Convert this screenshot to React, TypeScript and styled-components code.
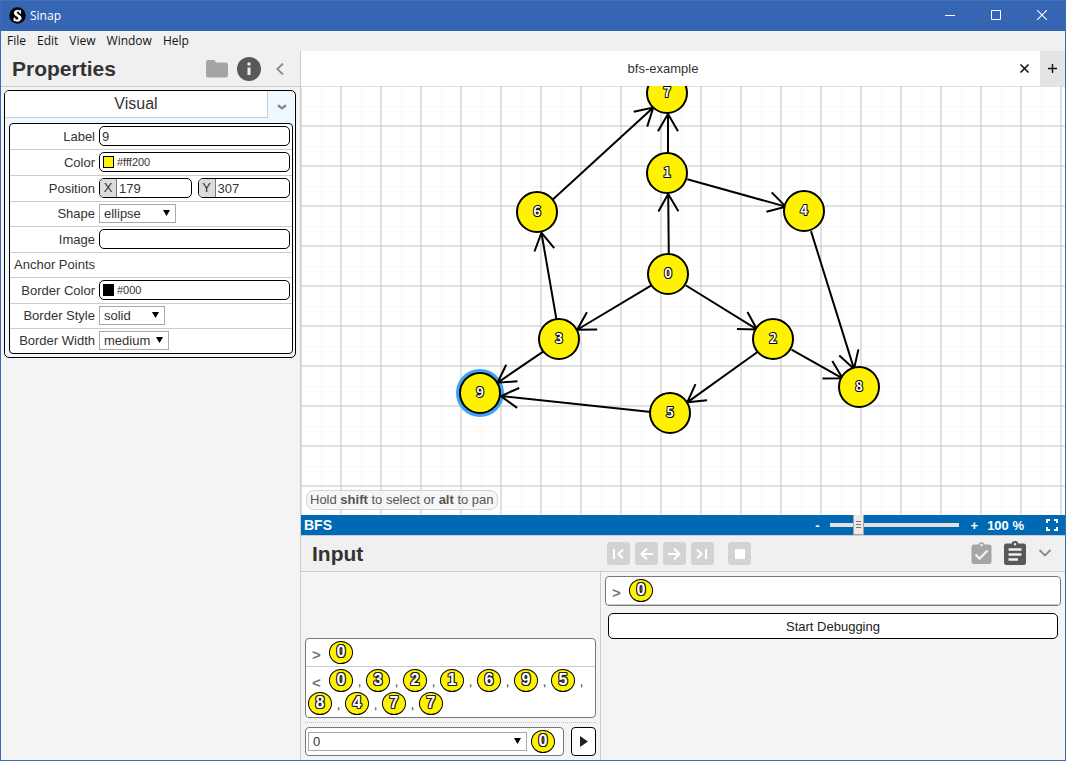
import React from 'react';
import styled, { createGlobalStyle, css } from 'styled-components';

const GlobalStyle = createGlobalStyle`
  *, *::before, *::after { box-sizing: border-box; }
  body {
    margin: 0;
    font-family: "Liberation Sans", Arial, sans-serif;
    font-size: 13px;
    color: #333;
  }
  button, input, select { font: inherit; color: inherit; margin: 0; }
  svg { display: block; }
`;

/* ---------- window frame ---------- */

const Window = styled.div`
  display: flex;
  flex-direction: column;
  height: 100vh;
  border: 1px solid #3d6ab5;
  border-top-color: #4370ba;
  background: #f4f4f4;
  overflow: hidden;
`;

const TitleBar = styled.header`
  display: flex;
  align-items: center;
  flex: none;
  height: 30px;
  padding: 0 0 2px 8px;
  background: #3665b3;
  color: #fff;
  font: 12px "Open Sans", "Segoe UI", sans-serif;
`;

const AppName = styled.span`
  flex: 1;
  padding-left: 4px;
`;

const PlainButton = styled.button`
  display: flex;
  align-items: center;
  justify-content: center;
  padding: 0;
  border: 0;
  background: none;
`;

const WindowButton = styled(PlainButton)`
  width: 46px;
  height: 28px;
  color: #fff;
`;

const MenuBar = styled.nav`
  display: flex;
  flex: none;
  gap: 11px;
  height: 20px;
  padding: 0 0 2px 6px;
  background: #f0f0f0;
`;

const MenuItem = styled(PlainButton)`
  color: #111;
  font: 12px "Open Sans", "Segoe UI", sans-serif;
`;

const Workspace = styled.div`
  display: flex;
  flex: 1;
  min-height: 0;
`;

/* ---------- sidebar ---------- */

const Sidebar = styled.aside`
  flex: none;
  width: 300px;
  border-right: 1px solid #ccc;
`;

const PanelHeader = styled.div`
  display: flex;
  align-items: center;
  height: 36px;
  padding: 0 15px 0 11px;
  border-bottom: 1px solid #ccc;
  background: #f0f0f0;
`;

const PanelTitle = styled.h2`
  flex: 1;
  margin: 0;
  font-size: 21px;
  line-height: 34px;
  font-weight: bold;
`;

const IconButton = styled(PlainButton)<{ $active?: boolean }>`
  color: ${(p) => (p.$active ? '#585858' : '#a5a5a5')};
`;

const SidebarIcons = styled.div`
  display: flex;
  align-items: center;
  gap: 9px;
`;

const Group = styled.section`
  margin: 3px 4px 0 3px;
  border: 1px solid #000;
  border-radius: 5px;
  background: #f0f8ff;
  overflow: hidden;
`;

const GroupHeader = styled.div`
  display: flex;
  height: 27px;
`;

const GroupTitle = styled.h3`
  flex: 1;
  margin: 0;
  border: solid #ccc;
  border-width: 0 1px 1px 0;
  background: #fff;
  font-size: 16px;
  font-weight: normal;
  line-height: 25px;
  text-align: center;
`;

const GroupToggle = styled(PlainButton)`
  width: 27px;
  padding-top: 4px;
  color: #888;
`;

const Fields = styled.div`
  margin: 5px 2px 3px 4px;
  border: 1px solid #000;
  border-radius: 4px;
  background: #fff;
  overflow: hidden;
`;

const FieldRow = styled.div<{ $compact?: boolean }>`
  display: grid;
  grid-template-columns: 85px 1fr;
  column-gap: 4px;
  align-items: center;
  height: ${(p) => (p.$compact ? '25px' : '26px')};
  padding: 0 2px 1px 0;
  border-bottom: 1px solid #ccc;
  &:last-child { height: 24px; border-bottom: 0; }
`;

const FieldLabel = styled.label`
  text-align: right;
  white-space: nowrap;
`;

const boxed = css`
  height: 20px;
  border: 1px solid #000;
  border-radius: 5px;
  background: #fff;
`;

const TextInput = styled.input`
  ${boxed}
  width: 100%;
  padding: 0 2px;
`;

const ColorBox = styled.div`
  ${boxed}
  display: flex;
  align-items: center;
  gap: 3px;
  padding-left: 3px;
`;

const Swatch = styled.span<{ $color: string }>`
  width: 11px;
  height: 12px;
  border: 1px solid #000;
  background: ${(p) => p.$color};
`;

const BareInput = styled.input<{ $small?: boolean }>`
  flex: 1;
  min-width: 0;
  padding: 0;
  border: 0;
  background: none;
  font-size: ${(p) => (p.$small ? '11px' : '13px')};
`;

const Pair = styled.div`
  display: grid;
  grid-template-columns: 1fr 1fr;
  gap: 6px;
`;

const AxisBox = styled.label`
  ${boxed}
  display: flex;
  gap: 2px;
  overflow: hidden;
`;

const AxisName = styled.span`
  width: 17px;
  border-right: 1px solid #777;
  background: #dcdcdc;
  line-height: 18px;
  text-align: center;
`;

const SelectWrap = styled.span<{ $width: string }>`
  position: relative;
  display: block;
  width: ${(p) => p.$width};
  height: 19px;
  svg {
    position: absolute;
    right: 6px;
    top: 6px;
    pointer-events: none;
  }
`;

const SelectBox = styled.select`
  appearance: none;
  display: block;
  width: 100%;
  height: 19px;
  padding: 0 4px;
  border: 1px solid #a9a9a9;
  border-radius: 0;
  background: #fff;
`;

/* ---------- editor ---------- */

const Main = styled.main`
  display: flex;
  flex: 1;
  flex-direction: column;
  min-width: 0;
`;

const TabBar = styled.div`
  display: flex;
  flex: none;
  height: 35px;
  background: #fff;
`;

const Tab = styled.div`
  display: flex;
  flex: 1;
  align-items: center;
  padding-right: 10px;
`;

const TabName = styled.span`
  flex: 1;
  padding-left: 6px;
  text-align: center;
`;

const CloseTab = styled(PlainButton)`
  color: #111;
`;

const AddTab = styled(PlainButton)`
  width: 25px;
  background: #e4e4e4;
  color: #111;
`;

const Canvas = styled.div`
  position: relative;
  flex: 1;
  min-height: 0;
  background: #fff;
  overflow: hidden;
`;

const Hint = styled.p`
  position: absolute;
  left: 5px;
  bottom: 5px;
  margin: 0;
  padding: 0 3px;
  border: 1px solid #d4d4d4;
  border-radius: 8px;
  background: rgba(244, 244, 244, 0.8);
  color: #555;
  line-height: 18px;
`;

const StatusBar = styled.footer`
  display: flex;
  flex: none;
  align-items: center;
  height: 20px;
  padding: 0 7px 0 3px;
  background: #0069b4;
  color: #fff;
  font-weight: bold;
`;

const PluginName = styled.span`
  flex: 1;
  font-size: 14px;
`;

const ZoomSlider = styled.input`
  appearance: none;
  width: 129px;
  height: 20px;
  margin: 0 12px 0 10px;
  background: none;
  &::-webkit-slider-runnable-track {
    height: 4px;
    background: #e5e0de;
  }
  &::-webkit-slider-thumb {
    appearance: none;
    width: 11px;
    height: 20px;
    margin-top: -8px;
    border: solid #a9a39f;
    border-width: 0 1px 1px;
    background:
      linear-gradient(#777, #777) center 6px / 5px 1px no-repeat,
      linear-gradient(#777, #777) center 9px / 5px 1px no-repeat,
      linear-gradient(#777, #777) center 12px / 5px 1px no-repeat,
      #ebe8e6;
  }
`;

const ZoomButton = styled(PlainButton)`
  font-weight: bold;
`;

const ZoomValue = styled.output`
  padding: 0 22px 0 9px;
`;

/* ---------- input panel ---------- */

const BottomHeader = styled.div`
  display: grid;
  grid-template-columns: 1fr auto 1fr;
  align-items: center;
  flex: none;
  height: 37px;
  padding-right: 8px;
  border: solid #ccc;
  border-width: 1px 0;
  background: #f0f0f0;
`;

const BottomTitle = styled(PanelTitle)`
  padding-left: 11px;
`;

const Steps = styled.div`
  display: flex;
  gap: 5px;
`;

const StepButton = styled(PlainButton)<{ $apart?: boolean }>`
  width: 23px;
  height: 23px;
  margin-left: ${(p) => (p.$apart ? '9px' : '0')};
  border-radius: 3px;
  background: #d3d3d3;
  color: #fff;
`;

const PanelIcons = styled.div`
  display: flex;
  align-items: center;
  justify-content: flex-end;
  gap: 12px;
  padding: 0 5px 2px 0;
`;

const BottomBody = styled.div`
  display: flex;
  flex: none;
  height: 188px;
`;

const Console = styled.section`
  display: flex;
  flex-direction: column;
  flex: none;
  justify-content: flex-end;
  width: 300px;
  padding: 4px;
  border-right: 1px solid #ccc;
`;

const Debugger = styled.section`
  flex: 1;
  padding: 4px;
`;

const Card = styled.div`
  border: 1px solid #777;
  border-radius: 4px;
  background: #fff;
  overflow: hidden;
`;

const Line = styled.div<{ $divided?: boolean }>`
  display: flex;
  flex-wrap: wrap;
  padding: 2px;
  border-bottom: ${(p) => (p.$divided ? '1px solid #ccc' : '0')};
`;

const Prompt = styled.span`
  width: 21px;
  padding: 5px 4px 0;
  color: #777;
  font-size: 15px;
  font-weight: bold;
  line-height: 18px;
`;

const Item = styled.span`
  display: flex;
  align-items: flex-end;
  line-height: 20px;
`;

const Comma = styled.span`
  width: 13px;
  text-align: center;
`;

const NodeBadge = styled.span`
  display: block;
  flex: none;
  width: 24px;
  height: 23px;
  border: 1px solid #000;
  border-radius: 50%;
  background: #fff200;
  color: #fff;
  font-size: 16px;
  font-weight: bold;
  line-height: 19px;
  text-align: center;
  text-shadow: 1px 0 #222, -1px 0 #222, 0 1px #222, 0 -1px #222, 1px 1px #222, -1px -1px #222, 1px -1px #222, -1px 1px #222;
`;

const Entry = styled.form`
  display: flex;
  gap: 7px;
  margin-top: 4px;
  padding-top: 4px;
  border-top: 1px dotted #bbb;
`;

const EntryField = styled.div`
  display: flex;
  flex: 1;
  align-items: center;
  gap: 4px;
  height: 29px;
  padding: 0 8px 0 2px;
  border: 1px solid #777;
  border-radius: 4px;
  background: #fff;
`;

const RunButton = styled(PlainButton)`
  width: 25px;
  height: 29px;
  border: 1px solid #000;
  border-radius: 4px;
  background: #fff;
`;

const DebugButton = styled(PlainButton)`
  width: calc(100% - 6px);
  height: 26px;
  margin: 7px 3px 0;
  border: 1px solid #000;
  border-radius: 5px;
  background: #fff;
  color: #222;
`;

/* ---------- graph ---------- */

const NodeText = styled.text`
  fill: #fff;
  stroke: #000;
  stroke-width: 2px;
  stroke-linejoin: round;
  paint-order: stroke;
  font: bold 13px "Noto Sans CJK JP", "DejaVu Sans", sans-serif;
  text-anchor: middle;
`;

interface GraphNode { x: number; y: number; selected?: boolean }

const nodes: GraphNode[] = [
  { x: 367, y: 188 },
  { x: 366, y: 87 },
  { x: 472, y: 253 },
  { x: 258, y: 253 },
  { x: 503, y: 125 },
  { x: 369, y: 327 },
  { x: 236, y: 126 },
  { x: 366, y: 7 },
  { x: 558, y: 301 },
  { x: 179, y: 307, selected: true },
];

const edges: [number, number][] = [
  [0, 1], [0, 2], [0, 3], [1, 7], [1, 4], [2, 5], [2, 8], [3, 6], [3, 9], [4, 8], [5, 9], [6, 7],
];

const RADIUS = 20;

function edgePath(from: GraphNode, to: GraphNode) {
  const angle = Math.atan2(to.y - from.y, to.x - from.x);
  const point = (x: number, y: number, a: number, r: number) =>
    `${(x + r * Math.cos(a)).toFixed(1)} ${(y + r * Math.sin(a)).toFixed(1)}`;
  const tipX = to.x + 1 - RADIUS * Math.cos(angle);
  const tipY = to.y + 1 - RADIUS * Math.sin(angle);
  const left = point(tipX, tipY, angle + Math.PI - Math.PI / 6, 20);
  const right = point(tipX, tipY, angle + Math.PI + Math.PI / 6, 20);
  return `M${point(from.x + 1, from.y + 1, angle, RADIUS)} L${tipX} ${tipY} M${left} L${tipX} ${tipY} L${right}`;
}

function Graph() {
  return (
    <svg width="100%" height="100%" role="img" aria-label="bfs-example graph">
      <defs>
        <pattern id="grid" width="40" height="40" patternUnits="userSpaceOnUse">
          <path d="M20 0V40M0 20H40" fill="none" stroke="#f0f0f0" strokeWidth="1" strokeDasharray="2 2" transform="translate(0.5 0.5)" />
          <path d="M0 0V40M40 0V40" fill="none" stroke="#c8c8c8" strokeOpacity="0.55" strokeWidth="2" />
          <path d="M0 0H40M0 40H40" fill="none" stroke="#c8c8c8" strokeOpacity="0.55" strokeWidth="2" />
        </pattern>
      </defs>
      <rect width="100%" height="100%" fill="url(#grid)" />
      {nodes.filter((n) => n.selected).map((n) => (
        <circle key={`${n.x},${n.y}`} cx={n.x} cy={n.y} r="24" fill="#39a3f4" />
      ))}
      <path d={edges.map(([a, b]) => edgePath(nodes[a], nodes[b])).join(' ')} fill="none" stroke="#000" strokeWidth="2" />
      {nodes.map((n, i) => (
        <g key={i}>
          <circle cx={n.x} cy={n.y} r={RADIUS} fill="#fff200" stroke="#000" strokeWidth="2" />
          <NodeText x={n.x} y={n.y + 4}>{i}</NodeText>
        </g>
      ))}
    </svg>
  );
}

/* ---------- shared pieces ---------- */

function Dropdown({ id, width, value, label }: { id: string; width: string; value: string; label?: string }) {
  return (
    <SelectWrap $width={width}>
      <SelectBox id={id} defaultValue={value} aria-label={label}>
        <option value={value}>{value}</option>
      </SelectBox>
      <svg width="7" height="6" viewBox="0 0 7 6"><path d="M0 0H7L3.5 6Z" fill="#000" /></svg>
    </SelectWrap>
  );
}

function ColorField({ id, value }: { id: string; value: string }) {
  return (
    <ColorBox>
      <Swatch $color={value} />
      <BareInput $small id={id} defaultValue={value} />
    </ColorBox>
  );
}

const visited = [0, 3, 2, 1, 6, 9, 5, 8, 4, 7, 7];

export default function App() {
  return (
    <Window>
      <GlobalStyle />
      <TitleBar>
        <svg width="17" height="17" viewBox="0 0 17 17">
          <circle cx="8.5" cy="8.5" r="8.2" fill="#000" />
          <path d="M11.6 6.3V3.4L10.8 3.9C8 2.4 5.2 3.6 5.3 6C5.4 9.3 9.8 8.8 9.8 11.3C9.8 13.5 6.5 13.6 5.6 10.9H5V14L5.9 13.6C8.8 15.1 12.2 13.8 12.1 11C12 7.6 7.4 8.2 7.5 5.6C7.6 3.6 10.4 3.8 11.1 6.3Z" fill="#fff" stroke="#fff" strokeWidth="0.9" />
        </svg>
        <AppName>Sinap</AppName>
        <WindowButton aria-label="Minimize">
          <svg width="10" height="10" viewBox="0 0 10 10"><path d="M0 5.5H10" stroke="#fff" /></svg>
        </WindowButton>
        <WindowButton aria-label="Maximize">
          <svg width="10" height="10" viewBox="0 0 10 10"><path d="M.5 .5H9.5V9.5H.5Z" fill="none" stroke="#fff" /></svg>
        </WindowButton>
        <WindowButton aria-label="Close">
          <svg width="10" height="10" viewBox="0 0 10 10"><path d="M0 0L10 10M10 0L0 10" stroke="#fff" strokeWidth="1.1" /></svg>
        </WindowButton>
      </TitleBar>

      <MenuBar>
        {['File', 'Edit', 'View', 'Window', 'Help'].map((m) => <MenuItem key={m}>{m}</MenuItem>)}
      </MenuBar>

      <Workspace>
        <Sidebar>
          <PanelHeader>
            <PanelTitle>Properties</PanelTitle>
            <SidebarIcons>
              <IconButton aria-label="Files">
                <svg width="22" height="18" viewBox="0 0 22 18"><path d="M2 0H8L10.500 2.500H20Q22 2.500 22 4.500V15.500Q22 17.500 20 17.500H2Q0 17.500 0 15.500V2Q0 0 2 0Z" fill="currentColor" /></svg>
              </IconButton>
              <IconButton $active aria-label="Properties">
                <svg width="24" height="24" viewBox="0 0 24 24">
                  <circle cx="12" cy="12" r="12" fill="currentColor" />
                  <path d="M12 5.500V8.500M12 10.500V18" stroke="#f0f0f0" strokeWidth="3" />
                </svg>
              </IconButton>
              <IconButton aria-label="Collapse sidebar">
                <svg width="15" height="12" viewBox="0 0 15 12"><path d="M13 .5L7.300 6L13 11.500" fill="none" stroke="#888" strokeWidth="1.800" /></svg>
              </IconButton>
            </SidebarIcons>
          </PanelHeader>

          <Group>
            <GroupHeader>
              <GroupTitle>Visual</GroupTitle>
              <GroupToggle aria-label="Collapse Visual">
                <svg width="10" height="6" viewBox="0 0 10 6"><path d="M1 1.200L5 4.400L9 1.200" fill="none" stroke="currentColor" strokeWidth="2.400" strokeLinejoin="round" /></svg>
              </GroupToggle>
            </GroupHeader>
            <Fields>
              <FieldRow>
                <FieldLabel htmlFor="label">Label</FieldLabel>
                <TextInput id="label" defaultValue="9" />
              </FieldRow>
              <FieldRow>
                <FieldLabel htmlFor="color">Color</FieldLabel>
                <ColorField id="color" value="#fff200" />
              </FieldRow>
              <FieldRow>
                <FieldLabel htmlFor="pos-x">Position</FieldLabel>
                <Pair>
                  <AxisBox><AxisName>X</AxisName><BareInput id="pos-x" defaultValue="179" /></AxisBox>
                  <AxisBox><AxisName>Y</AxisName><BareInput id="pos-y" defaultValue="307" /></AxisBox>
                </Pair>
              </FieldRow>
              <FieldRow $compact>
                <FieldLabel htmlFor="shape">Shape</FieldLabel>
                <Dropdown id="shape" width="77px" value="ellipse" />
              </FieldRow>
              <FieldRow>
                <FieldLabel htmlFor="image">Image</FieldLabel>
                <TextInput id="image" />
              </FieldRow>
              <FieldRow $compact>
                <FieldLabel as="span">Anchor Points</FieldLabel>
              </FieldRow>
              <FieldRow>
                <FieldLabel htmlFor="border-color">Border Color</FieldLabel>
                <ColorField id="border-color" value="#000" />
              </FieldRow>
              <FieldRow $compact>
                <FieldLabel htmlFor="border-style">Border Style</FieldLabel>
                <Dropdown id="border-style" width="66px" value="solid" />
              </FieldRow>
              <FieldRow $compact>
                <FieldLabel htmlFor="border-width">Border Width</FieldLabel>
                <Dropdown id="border-width" width="70px" value="medium" />
              </FieldRow>
            </Fields>
          </Group>
        </Sidebar>

        <Main>
          <TabBar>
            <Tab>
              <TabName>bfs-example</TabName>
              <CloseTab aria-label="Close tab">
                <svg width="11" height="11" viewBox="0 0 11 11"><path d="M1.500 1.500L9.500 9.500M9.500 1.500L1.500 9.500" stroke="currentColor" strokeWidth="1.600" /></svg>
              </CloseTab>
            </Tab>
            <AddTab aria-label="New tab">
              <svg width="9" height="9" viewBox="0 0 9 9"><path d="M4.500 0V9M0 4.500H9" stroke="currentColor" strokeWidth="1.400" /></svg>
            </AddTab>
          </TabBar>

          <Canvas>
            <Graph />
            <Hint>Hold <b>shift</b> to select or <b>alt</b> to pan</Hint>
          </Canvas>

          <StatusBar>
            <PluginName>BFS</PluginName>
            <ZoomButton aria-label="Zoom out">-</ZoomButton>
            <ZoomSlider type="range" min="0" max="100" defaultValue="20" aria-label="Zoom" />
            <ZoomButton aria-label="Zoom in">+</ZoomButton>
            <ZoomValue>100 %</ZoomValue>
            <PlainButton aria-label="Full screen">
              <svg width="12" height="12" viewBox="0 0 12 12"><path d="M1 4V1H4M8 1H11V4M11 8V11H8M4 11H1V8" fill="none" stroke="#fff" strokeWidth="2" /></svg>
            </PlainButton>
          </StatusBar>

          <BottomHeader>
            <BottomTitle>Input</BottomTitle>
            <Steps>
              <StepButton aria-label="First step">
                <svg width="23" height="23" viewBox="0 0 23 23"><path d="M7 7V17M16 7.500L11.500 12L16 16.500" fill="none" stroke="currentColor" strokeWidth="2" /></svg>
              </StepButton>
              <StepButton aria-label="Step back">
                <svg width="23" height="23" viewBox="0 0 23 23"><path d="M18 12H6M12 6.500L6.500 12L12 17.500" fill="none" stroke="currentColor" strokeWidth="2" /></svg>
              </StepButton>
              <StepButton aria-label="Step forward">
                <svg width="23" height="23" viewBox="0 0 23 23"><path d="M5 12H17M11 6.500L16.500 12L11 17.500" fill="none" stroke="currentColor" strokeWidth="2" /></svg>
              </StepButton>
              <StepButton aria-label="Last step">
                <svg width="23" height="23" viewBox="0 0 23 23"><path d="M15 7V17M6 7.500L10.500 12L6 16.500" fill="none" stroke="currentColor" strokeWidth="2" /></svg>
              </StepButton>
              <StepButton $apart aria-label="Stop">
                <svg width="10" height="10" viewBox="0 0 10 10"><rect width="10" height="10" fill="currentColor" /></svg>
              </StepButton>
            </Steps>
            <PanelIcons>
              <IconButton aria-label="Tests">
                <svg width="21" height="22" viewBox="0 0 21 22">
                  <path fillRule="evenodd" d="M3 2.500H7.500C8 -.6 13 -.6 13.500 2.500H18Q20.500 2.500 20.500 5V19.500Q20.500 22 18 22H3Q.5 22 .5 19.500V5Q.5 2.500 3 2.500ZM10.500 1.800A1.200 1.200 0 1 0 10.500 4.200A1.200 1.200 0 1 0 10.500 1.800Z" fill="currentColor" />
                  <path d="M4.500 12.500L8.500 16.500L16.500 8.500" fill="none" stroke="#f0f0f0" strokeWidth="2.400" />
                </svg>
              </IconButton>
              <IconButton $active aria-label="Input">
                <svg width="22" height="24" viewBox="0 0 22 24">
                  <path fillRule="evenodd" d="M2.500 2.500H7.500C8.200 -.8 13.800 -.8 14.500 2.500H19.500Q22 2.500 22 5V21.500Q22 24 19.500 24H2.500Q0 24 0 21.500V5Q0 2.500 2.500 2.500ZM11 2A1.200 1.200 0 1 0 11 4.400A1.200 1.200 0 1 0 11 2Z" fill="currentColor" />
                  <path d="M4.500 8.500H17.500M4.500 13.500H17.500M4.500 18.500H14" stroke="#f0f0f0" strokeWidth="2.400" />
                </svg>
              </IconButton>
              <IconButton aria-label="Collapse panel">
                <svg width="14" height="8" viewBox="0 0 14 8"><path d="M1.500 1L7 6.500L12.500 1" fill="none" stroke="#888" strokeWidth="1.800" /></svg>
              </IconButton>
            </PanelIcons>
          </BottomHeader>

          <BottomBody>
            <Console>
              <Card>
                <Line $divided><Prompt>&gt;</Prompt><NodeBadge>0</NodeBadge></Line>
                <Line>
                  <Prompt>&lt;</Prompt>
                  {visited.map((v, i) => (
                    <Item key={i}>
                      <NodeBadge>{v}</NodeBadge>
                      {i < visited.length - 1 && <Comma>,</Comma>}
                    </Item>
                  ))}
                </Line>
              </Card>
              <Entry onSubmit={(e) => e.preventDefault()}>
                <EntryField>
                  <Dropdown id="start-node" width="100%" value="0" label="Start node" />
                  <NodeBadge>0</NodeBadge>
                </EntryField>
                <RunButton aria-label="Run">
                  <svg width="8" height="11" viewBox="0 0 8 11"><path d="M0 0L8 5.500L0 11Z" fill="#222" /></svg>
                </RunButton>
              </Entry>
            </Console>
            <Debugger>
              <Card>
                <Line $divided><Prompt>&gt;</Prompt><NodeBadge>0</NodeBadge></Line>
              </Card>
              <DebugButton>Start Debugging</DebugButton>
            </Debugger>
          </BottomBody>
        </Main>
      </Workspace>
    </Window>
  );
}
